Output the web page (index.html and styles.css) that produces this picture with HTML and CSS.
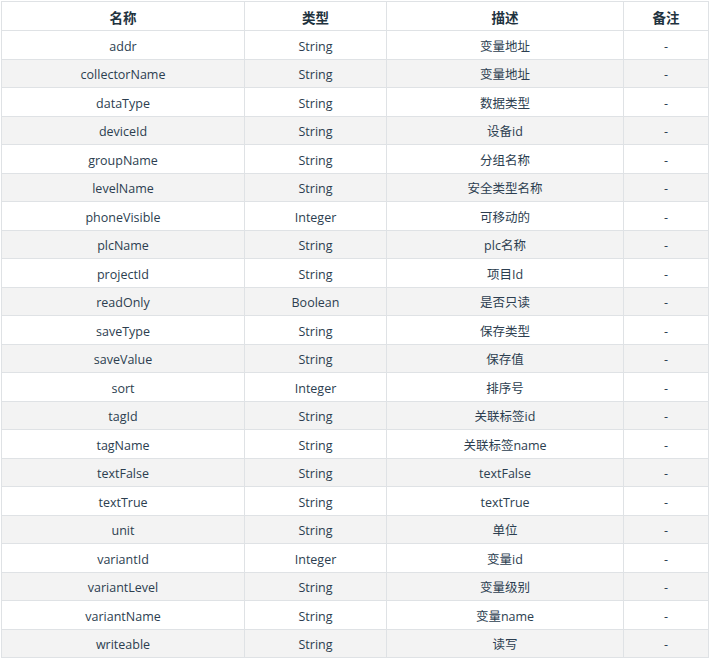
FILE: index.html
```html
<!DOCTYPE html>
<html lang="zh">
<head>
<meta charset="utf-8">
<link rel="stylesheet" href="styles.css">
</head>
<body>
<table class="api-table">
  <colgroup>
    <col class="c1"><col class="c2"><col class="c3"><col class="c4">
  </colgroup>
  <thead>
    <tr><th>名称</th><th>类型</th><th>描述</th><th>备注</th></tr>
  </thead>
  <tbody>
    <tr><td>addr</td><td>String</td><td>变量地址</td><td>-</td></tr>
    <tr><td>collectorName</td><td>String</td><td>变量地址</td><td>-</td></tr>
    <tr><td>dataType</td><td>String</td><td>数据类型</td><td>-</td></tr>
    <tr><td>deviceId</td><td>String</td><td>设备id</td><td>-</td></tr>
    <tr><td>groupName</td><td>String</td><td>分组名称</td><td>-</td></tr>
    <tr><td>levelName</td><td>String</td><td>安全类型名称</td><td>-</td></tr>
    <tr><td>phoneVisible</td><td>Integer</td><td>可移动的</td><td>-</td></tr>
    <tr><td>plcName</td><td>String</td><td>plc名称</td><td>-</td></tr>
    <tr><td>projectId</td><td>String</td><td>项目Id</td><td>-</td></tr>
    <tr><td>readOnly</td><td>Boolean</td><td>是否只读</td><td>-</td></tr>
    <tr><td>saveType</td><td>String</td><td>保存类型</td><td>-</td></tr>
    <tr><td>saveValue</td><td>String</td><td>保存值</td><td>-</td></tr>
    <tr><td>sort</td><td>Integer</td><td>排序号</td><td>-</td></tr>
    <tr><td>tagId</td><td>String</td><td>关联标签id</td><td>-</td></tr>
    <tr><td>tagName</td><td>String</td><td>关联标签name</td><td>-</td></tr>
    <tr><td>textFalse</td><td>String</td><td>textFalse</td><td>-</td></tr>
    <tr><td>textTrue</td><td>String</td><td>textTrue</td><td>-</td></tr>
    <tr><td>unit</td><td>String</td><td>单位</td><td>-</td></tr>
    <tr><td>variantId</td><td>Integer</td><td>变量id</td><td>-</td></tr>
    <tr><td>variantLevel</td><td>String</td><td>变量级别</td><td>-</td></tr>
    <tr><td>variantName</td><td>String</td><td>变量name</td><td>-</td></tr>
    <tr><td>writeable</td><td>String</td><td>读写</td><td>-</td></tr>
  </tbody>
</table>
</body>
</html>
```
FILE: styles.css
```css
html, body {
  margin: 0;
  padding: 0;
  background: #ffffff;
}
body {
  padding: 1px;
  font-family: "Open Sans", "Noto Sans CJK SC", sans-serif;
  font-size: 12.5px;
  color: #2c3e50;
}
.api-table {
  border-collapse: collapse;
  table-layout: fixed;
  width: 707px;
}
.c1 { width: 243px; }
.c2 { width: 142px; }
.c3 { width: 237px; }
.c4 { width: 85px; }
.api-table th,
.api-table td {
  border: 1px solid #dfe2e5;
  text-align: center;
  vertical-align: middle;
  padding: 4px 0 0 0;
  line-height: 18px;
}
.api-table thead tr {
  height: 29px;
}
.api-table tbody tr {
  height: 28.5px;
}
.api-table th {
  font-weight: bold;
  font-size: 13.5px;
  color: #1f3340;
}
.api-table tbody tr:nth-child(2n) {
  background: #f3f3f3;
}
```
